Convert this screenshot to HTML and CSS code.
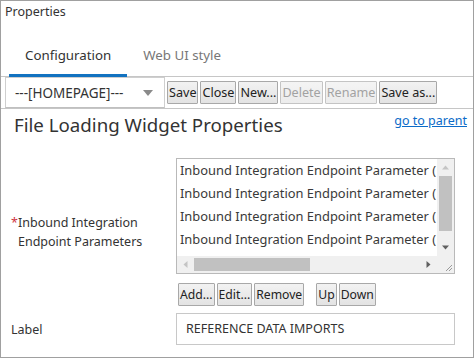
FILE: index.html
```html
<!DOCTYPE html>
<html>
<head>
<meta charset="utf-8">
<link rel="stylesheet" href="styles.css">
</head>
<body>
<div class="frame">
  <div class="title">Properties</div>
  <div class="tabs">
    <div class="tab active">Configuration</div>
    <div class="tab">Web UI style</div>
  </div>
  <div class="toolbar">
    <div class="select">
      <span>---[HOMEPAGE]---</span>
      <svg class="caret" width="10" height="6" viewBox="0 0 10 6"><path d="M0 0h10L5 6z" fill="#8a8a8a"/></svg>
    </div>
    <div class="btns">
      <button class="btn">Save</button>
      <button class="btn">Close</button>
      <button class="btn">New...</button>
      <button class="btn" disabled>Delete</button>
      <button class="btn" disabled>Rename</button>
      <button class="btn">Save as...</button>
    </div>
  </div>
  <div class="heading">
    <div class="htitle">File Loading Widget Properties</div>
    <a class="link" href="#">go to parent</a>
  </div>
  <div class="row">
    <div class="label req"><span class="star">*</span><span>Inbound Integration<br>Endpoint Parameters</span></div>
    <div class="field">
      <div class="listbox">
        <div class="items">
          <div class="item">Inbound Integration Endpoint Parameter (</div>
          <div class="item">Inbound Integration Endpoint Parameter (</div>
          <div class="item">Inbound Integration Endpoint Parameter (</div>
          <div class="item">Inbound Integration Endpoint Parameter (</div>
        </div>
        <div class="vscroll">
          <svg width="17" height="17" viewBox="0 0 17 17"><path d="M5 10.5h7L8.5 6.5z" fill="#c4c4c4"/></svg>
          <div class="vtrack"><div class="vthumb"></div></div>
          <svg width="17" height="17" viewBox="0 0 17 17"><path d="M5 6.5h7L8.5 10.5z" fill="#606060"/></svg>
        </div>
        <div class="hscroll">
          <svg width="17" height="17" viewBox="0 0 17 17"><path d="M10.5 5v7L6.5 8.5z" fill="#c4c4c4"/></svg>
          <div class="htrack"><div class="hthumb"></div></div>
          <svg width="17" height="17" viewBox="0 0 17 17"><path d="M6.5 5v7L10.5 8.5z" fill="#606060"/></svg>
        </div>
        <div class="corner">
          <svg width="17" height="17" viewBox="0 0 17 17"><path d="M15 9L9 15M15 12L12 15" stroke="#9a9a9a" stroke-width="1"/></svg>
        </div>
      </div>
      <div class="listbtns">
        <button class="btn">Add...</button>
        <button class="btn">Edit...</button>
        <button class="btn">Remove</button>
        <button class="btn gap">Up</button>
        <button class="btn">Down</button>
      </div>
    </div>
  </div>
  <div class="row row2">
    <div class="label">Label</div>
    <div class="field">
      <div class="input">REFERENCE DATA IMPORTS</div>
    </div>
  </div>
</div>
</body>
</html>
```

FILE: styles.css
```css
html, body {
  margin: 0;
  padding: 0;
  background: #fff;
}
body {
  font-family: "Noto Sans", "Open Sans", sans-serif;
  color: #333;
}
.frame {
  box-sizing: border-box;
  width: 474px;
  height: 358px;
  border: 1px solid #a0a0a0;
  display: flex;
  flex-direction: column;
}
.title {
  font-size: 12.5px;
  height: 22px;
  line-height: 22px;
  padding-left: 4px;
  color: #333;
}
.tabs {
  display: flex;
  margin-top: 13px;
  padding-left: 8px;
  border-bottom: 1px solid #c6c6c6;
}
.tab {
  font-size: 13.3px;
  height: 38px;
  line-height: 38px;
  padding: 0 16px;
  color: #777;
  border-bottom: 3px solid transparent;
  margin-bottom: -1px;
}
.tab.active {
  color: #333;
  border-bottom-color: #1272c0;
}
.toolbar {
  display: flex;
  align-items: center;
  height: 31px;
  border-bottom: 1px solid #c6c6c6;
}
.select {
  box-sizing: border-box;
  margin-left: 4px;
  width: 160px;
  height: 31px;
  border: 1px solid #cfcfcf;
  border-bottom-color: #c0c0c0;
  display: flex;
  align-items: center;
  justify-content: space-between;
  padding: 0 11px 0 9px;
  font-size: 13.5px;
  color: #333;
}
.caret { margin-top: 1px; }
.btns {
  display: flex;
  gap: 2px;
  margin-left: 2px;
}
.btn {
  box-sizing: border-box;
  height: 23px;
  padding: 0 1px;
  font-family: "Noto Sans", "Open Sans", sans-serif;
  font-size: 12.6px;
  color: #222;
  background: linear-gradient(#f2f2f2, #e3e3e3);
  border: 1px solid #a8a8a8;
  border-radius: 1px;
  margin: 0;
  line-height: 21px;
}
.btn[disabled] {
  color: #a2a2a2;
  border-color: #c4c4c4;
  background: linear-gradient(#f4f4f4, #ececec);
}
.heading {
  display: flex;
  justify-content: space-between;
  align-items: flex-start;
  padding: 4px 6px 0 13px;
  height: 45px;
}
.htitle {
  font-size: 18.7px;
  line-height: 24px;
  color: #333;
}
.link {
  font-size: 12.5px;
  color: #0b6bc8;
  text-decoration: underline;
  line-height: 16px;
}
.row {
  display: flex;
  align-items: center;
}
.label {
  box-sizing: border-box;
  width: 175px;
  padding-left: 10px;
  font-size: 12.5px;
  line-height: 19px;
  color: #333;
}
.req {
  display: flex;
}
.star {
  color: #d0343f;
  width: 7px;
}
.field {
  width: 279px;
}
.listbox {
  box-sizing: border-box;
  width: 279px;
  height: 116px;
  border: 1px solid #b9b9b9;
  display: grid;
  grid-template-columns: 1fr 17px;
  grid-template-rows: 1fr 17px;
}
.items {
  overflow: hidden;
  padding-left: 3px;
}
.item {
  white-space: nowrap;
  font-size: 12.9px;
  line-height: 23px;
  color: #3a3a3a;
}
.vscroll {
  background: #f0f0f0;
  display: flex;
  flex-direction: column;
}
.vtrack {
  flex: 1;
  display: flex;
  flex-direction: column;
}
.vthumb {
  margin: 0 2px;
  height: 55px;
  background: #c1c1c1;
}
.hscroll {
  background: #f0f0f0;
  display: flex;
}
.htrack {
  flex: 1;
  display: flex;
  align-items: center;
}
.hthumb {
  width: 116px;
  height: 13px;
  background: #c1c1c1;
}
.corner {
  background: #f0f0f0;
}
.listbtns {
  display: flex;
  gap: 2px;
  margin-top: 9px;
  padding-left: 2px;
}
.listbtns .btn {
  font-size: 12.2px;
}
.listbtns .gap {
  margin-left: 10px;
}
.row2 {
  margin-top: 7px;
}
.input {
  box-sizing: border-box;
  height: 32px;
  border: 1px solid #c8c8c8;
  padding-left: 9px;
  font-size: 12.5px;
  line-height: 30px;
  color: #333;
}
```
